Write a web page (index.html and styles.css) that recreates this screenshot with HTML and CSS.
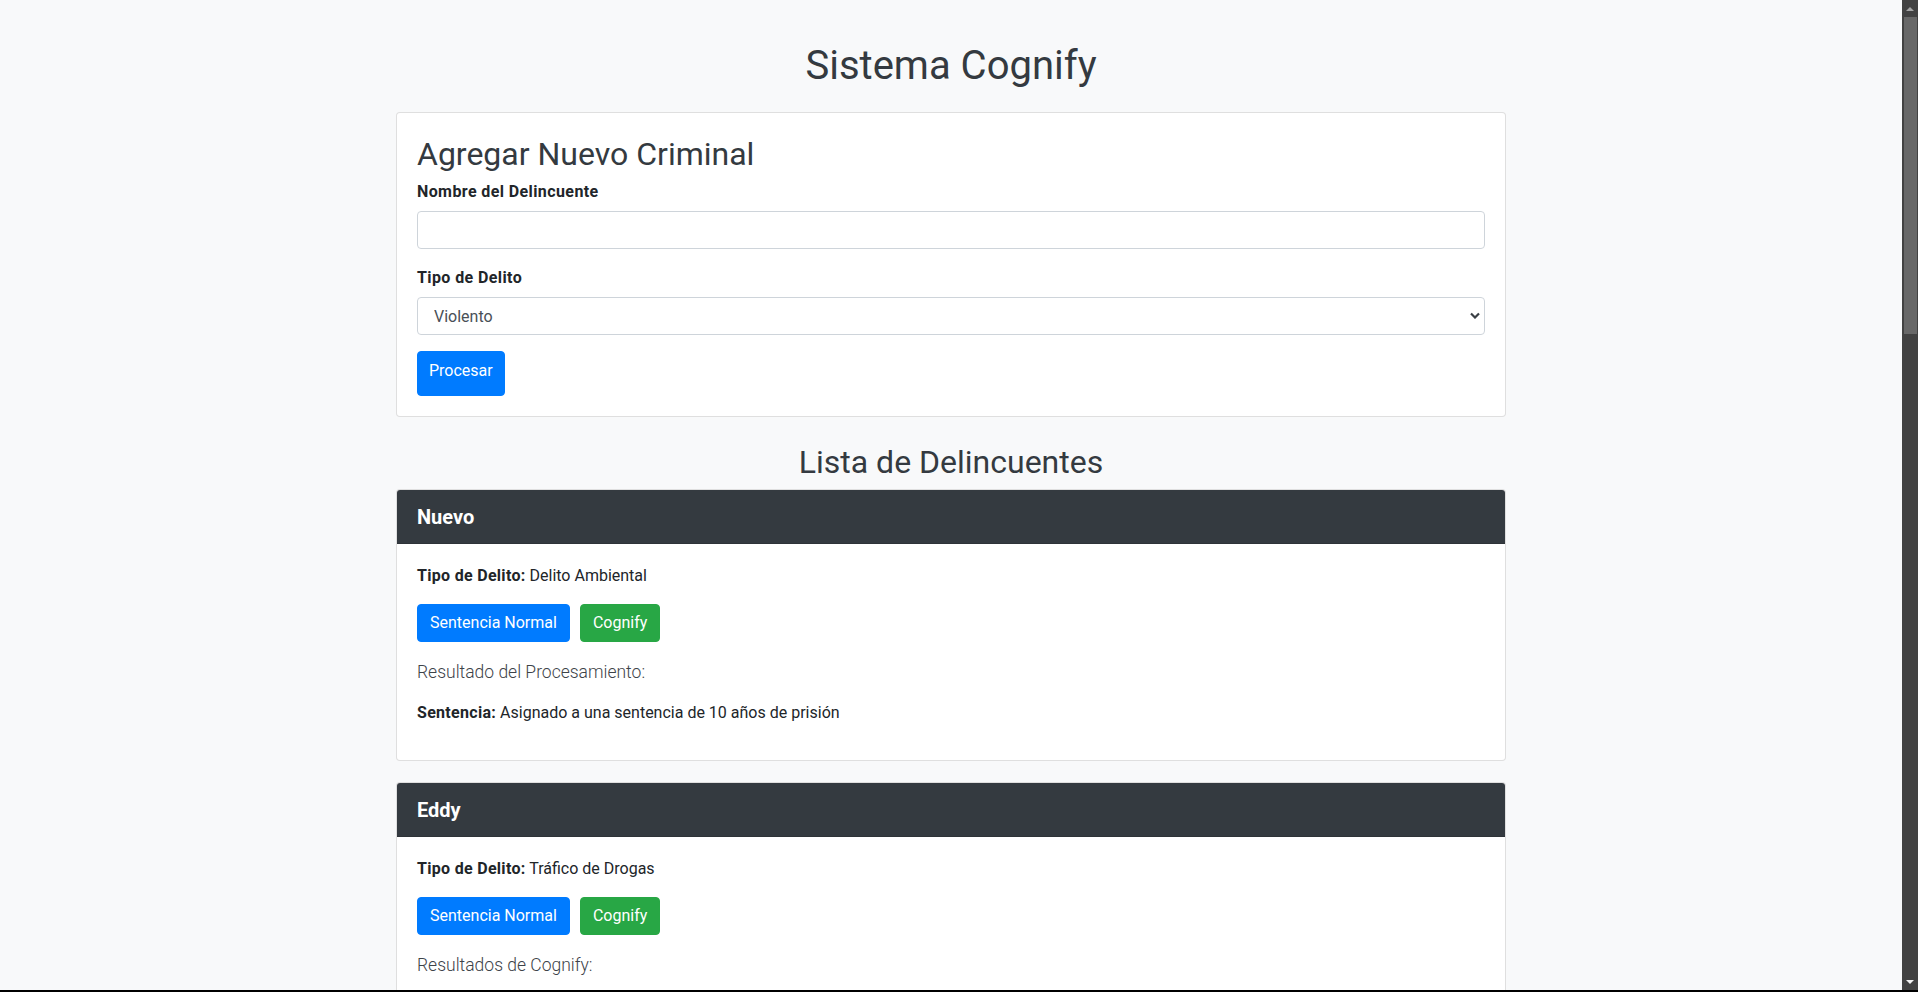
FILE: index.html
```html
<!DOCTYPE html>
<html lang="es">
<head>
<meta charset="utf-8">
<title>Sistema Cognify</title>
<link rel="stylesheet" href="styles.css">
</head>
<body>
<div class="viewport">
  <div class="screen">
    <main class="page">
      <div class="container">
        <h1 class="title">Sistema Cognify</h1>

        <section class="card">
          <div class="card-body">
            <h2 class="card-heading">Agregar Nuevo Criminal</h2>
            <div class="form-group">
              <label class="form-label" for="nombre">Nombre del Delincuente</label>
              <input class="form-control" id="nombre" type="text">
            </div>
            <div class="form-group form-group-last">
              <label class="form-label" for="tipo">Tipo de Delito</label>
              <div class="select-wrap">
                <select class="form-control form-select" id="tipo">
                  <option>Violento</option>
                  <option>Tráfico de Drogas</option>
                  <option>Delito Ambiental</option>
                  <option>Fraude</option>
                </select>
                <svg class="select-arrow" width="10" height="7" viewBox="0 0 10 7" aria-hidden="true"><polyline points="1,1.5 5,5.5 9,1.5" fill="none" stroke="#3a3f45" stroke-width="2.2"/></svg>
              </div>
            </div>
            <button class="btn btn-primary btn-submit" type="button">Procesar</button>
          </div>
        </section>

        <h2 class="list-title">Lista de Delincuentes</h2>

        <article class="card criminal">
          <header class="card-header">Nuevo</header>
          <div class="card-body">
            <p class="info"><strong>Tipo de Delito:</strong> Delito Ambiental</p>
            <div class="actions">
              <button class="btn btn-primary" type="button">Sentencia Normal</button>
              <button class="btn btn-success" type="button">Cognify</button>
            </div>
            <h5 class="result-title">Resultado del Procesamiento:</h5>
            <p class="result"><strong>Sentencia:</strong> Asignado a una sentencia de 10 años de prisión</p>
          </div>
        </article>

        <article class="card criminal">
          <header class="card-header">Eddy</header>
          <div class="card-body">
            <p class="info"><strong>Tipo de Delito:</strong> Tráfico de Drogas</p>
            <div class="actions">
              <button class="btn btn-primary" type="button">Sentencia Normal</button>
              <button class="btn btn-success" type="button">Cognify</button>
            </div>
            <h5 class="result-title">Resultados de Cognify:</h5>
          </div>
        </article>
      </div>
    </main>
    <div class="scrollbar" aria-hidden="true">
      <div class="sb-btn"><span class="sb-up"></span></div>
      <div class="sb-thumb"></div>
      <div class="sb-track"></div>
      <div class="sb-btn"><span class="sb-down"></span></div>
    </div>
  </div>
  <div class="bottom-line"></div>
</div>
</body>
</html>
```

FILE: styles.css
```css
* {
  box-sizing: border-box;
}

html,
body {
  margin: 0;
  padding: 0;
  height: 100%;
  overflow: hidden;
}

body {
  font-family: Roboto, "Liberation Sans", Arial, sans-serif;
  font-size: 16px;
  line-height: 24px;
  color: #212529;
  background: #f8f9fa;
}

strong {
  font-weight: 700;
  letter-spacing: 0.3px;
}

.viewport {
  height: 100vh;
  display: flex;
  flex-direction: column;
}

.screen {
  flex: 1;
  min-height: 0;
  display: flex;
}

.page {
  flex: 1;
  min-width: 0;
  overflow: hidden;
}

.container {
  width: 1140px;
  margin: 0 auto;
  padding: 0 15px;
}

.title {
  margin: 42px 0 22px;
  font-size: 40px;
  line-height: 48px;
  font-weight: 400;
  text-align: center;
  color: #343a40;
}

.card {
  background: #fff;
  border: 1px solid rgba(0, 0, 0, 0.125);
  border-radius: 4px;
  overflow: hidden;
}

.card-body {
  padding: 20px;
}

.card-heading {
  margin: 2px 0 7px;
  font-size: 32px;
  line-height: 38px;
  font-weight: 400;
  color: #343a40;
}

.form-group {
  margin-bottom: 17px;
}

.form-group-last {
  margin-bottom: 16px;
}

.form-label {
  display: block;
  margin-bottom: 7px;
  font-weight: 700;
  letter-spacing: 0.4px;
  color: #212529;
}

.form-control {
  display: block;
  width: 100%;
  height: 38px;
  padding: 7px 12px 5px;
  font-family: inherit;
  font-size: 16px;
  line-height: 24px;
  color: #495057;
  background: #fff;
  border: 1px solid #ced4da;
  border-radius: 4px;
  outline: none;
}

.select-wrap {
  position: relative;
}

.form-select {
  -webkit-appearance: none;
  appearance: none;
  padding-left: 16px;
}

.select-arrow {
  position: absolute;
  right: 5px;
  top: 15px;
  pointer-events: none;
}

.btn {
  display: inline-block;
  padding: 6px 12px;
  font-family: inherit;
  font-size: 16px;
  line-height: 24px;
  color: #fff;
  border: 1px solid transparent;
  border-radius: 4px;
  cursor: pointer;
}

.btn-primary {
  background: #007bff;
  border-color: #007bff;
}

.btn-success {
  background: #28a745;
  border-color: #28a745;
}

.btn-submit {
  padding: 7px 11px 12px;
}

.list-title {
  margin: 26px 0 8px;
  font-size: 32px;
  line-height: 38px;
  font-weight: 400;
  text-align: center;
  color: #343a40;
}

.criminal {
  margin-bottom: 21px;
}

.card-header {
  padding: 13px 20px 12px;
  font-size: 20px;
  line-height: 28px;
  font-weight: 700;
  color: #fff;
  background: #343a40;
  border-bottom: 1px solid #2e3338;
}

.info {
  margin: 0 0 16px;
}

.actions {
  display: flex;
  gap: 10px;
}

.result-title {
  margin: 18px 0 0;
  font-size: 17.5px;
  line-height: 24px;
  font-weight: 300;
  color: #3d4349;
}

.result {
  margin: 17px 0 15px;
}

.scrollbar {
  width: 16px;
  background: #424242;
  display: flex;
  flex-direction: column;
}

.sb-btn {
  height: 17px;
  display: flex;
  align-items: center;
  justify-content: center;
}

.sb-up {
  width: 0;
  height: 0;
  border-left: 4px solid transparent;
  border-right: 4px solid transparent;
  border-bottom: 4px solid #a6a6a6;
}

.sb-down {
  width: 0;
  height: 0;
  border-left: 4px solid transparent;
  border-right: 4px solid transparent;
  border-top: 4px solid #f2f2f2;
}

.sb-thumb {
  height: 317px;
  margin: 0 1px 0 2px;
  background: #686868;
}

.sb-track {
  flex: 1;
}

.bottom-line {
  height: 2px;
  background: #000;
}
```
